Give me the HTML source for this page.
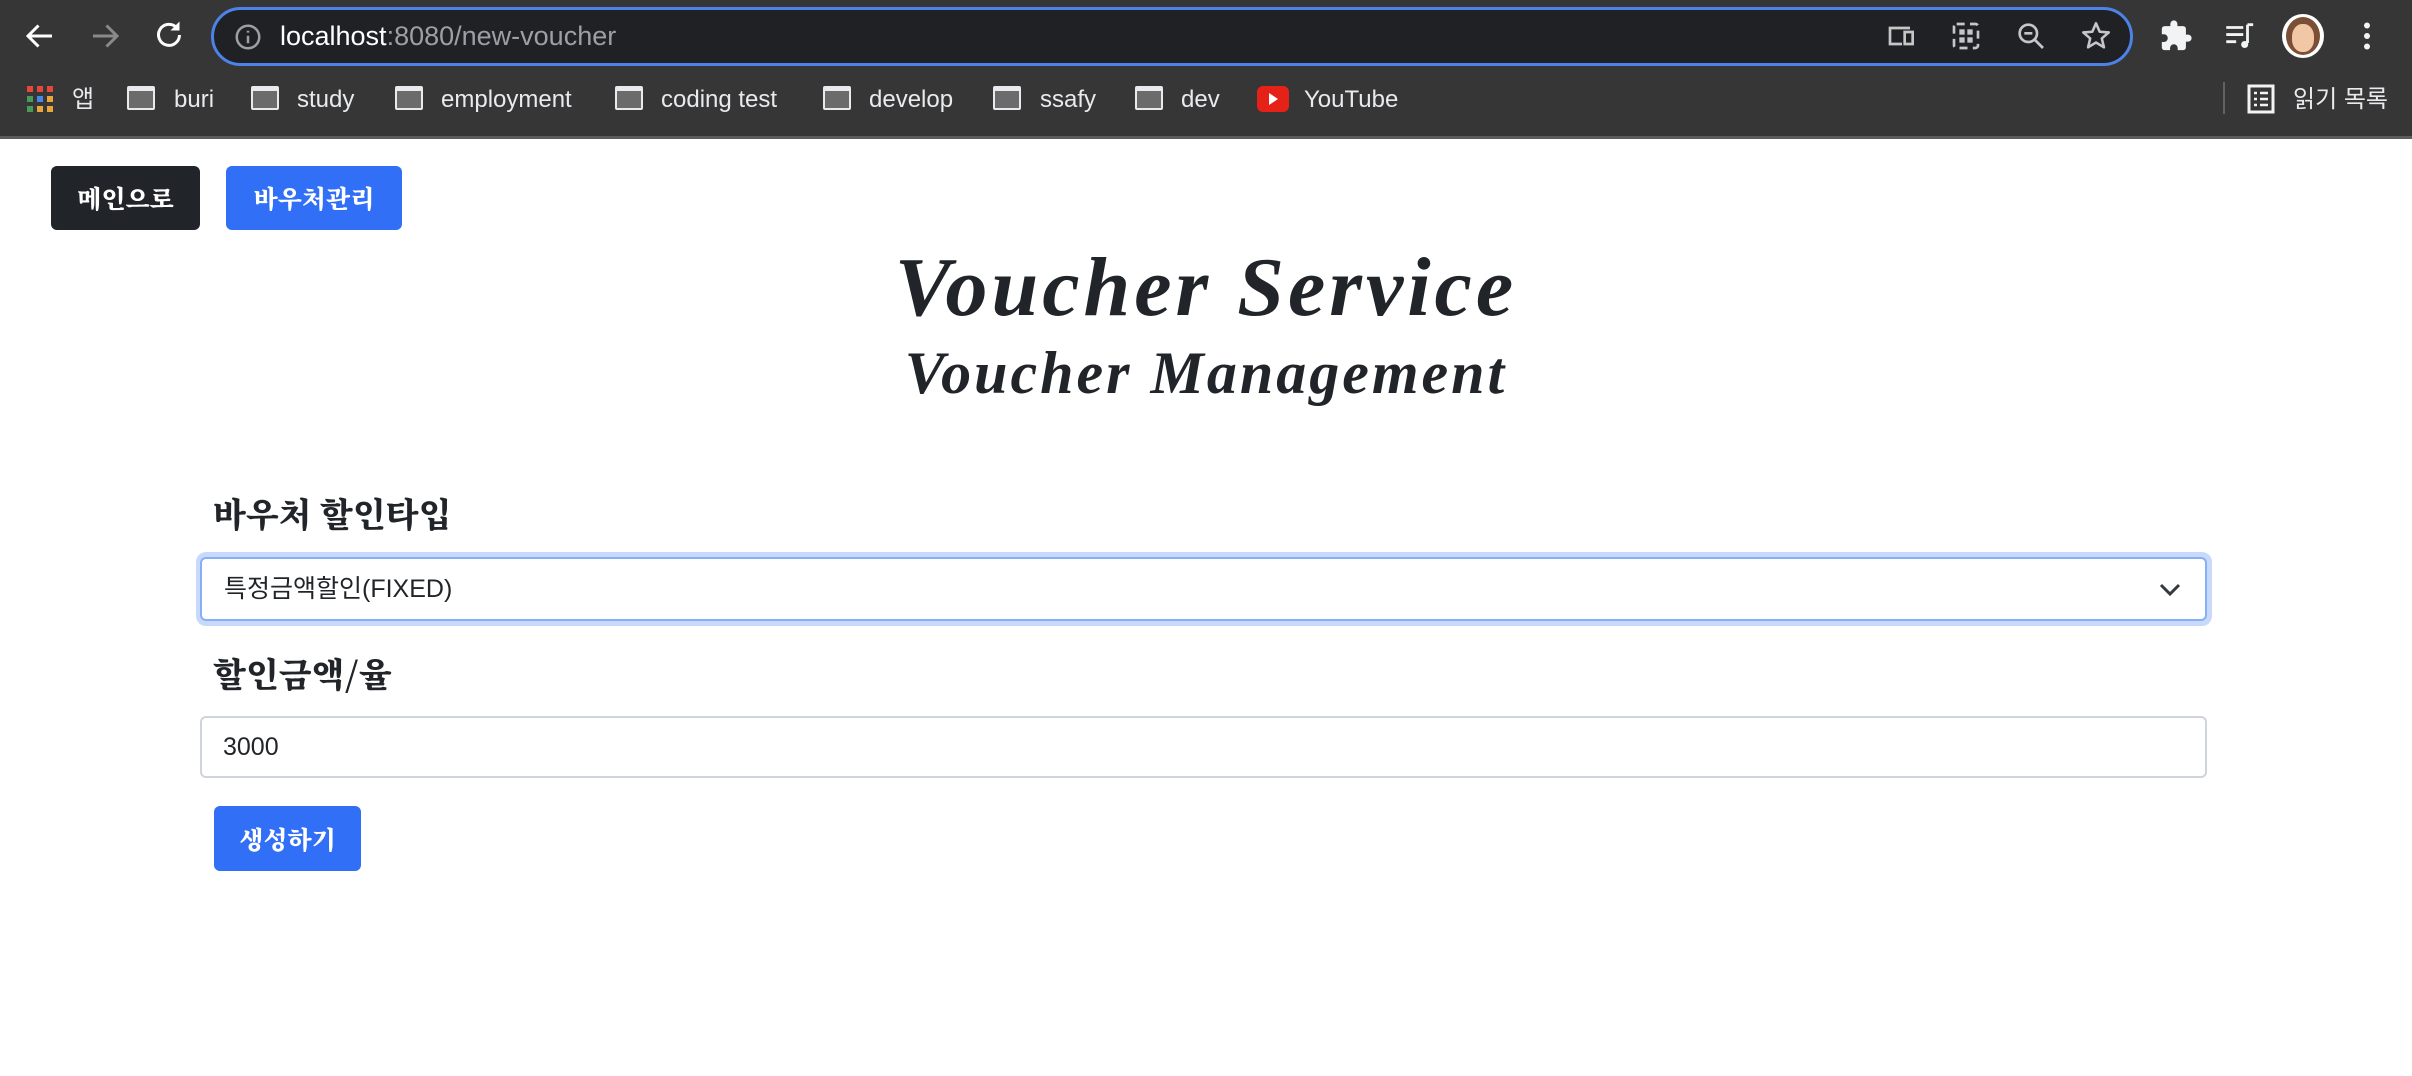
<!DOCTYPE html>
<html><head><meta charset="utf-8"><style>
*{box-sizing:border-box;margin:0;padding:0}
body{width:2412px;height:1076px;background:#fff;position:relative;overflow:hidden;font-family:"Liberation Sans","Noto Sans CJK KR",sans-serif}
.abs{position:absolute}
#chrome{left:0;top:0;width:2412px;height:136px;background:#363636}
#line{left:0;top:136px;width:2412px;height:3px;background:#5c5c5c}
#addr{left:211px;top:7px;width:1922px;height:59px;border:3px solid #4d82e6;border-radius:30px;background:#202124}
.url{left:280px;top:18px;font-size:27px;color:#fff;line-height:36px}
.url span{color:#9aa0a6}
.bm{top:84px;font-size:24px;color:#e8eaed;line-height:32px}
.fold{top:86px;width:28px;height:24px;border:2px solid #e8eaed;border-top-width:5px;background:#6b6b6b;border-radius:2px}
.btn{border-radius:6px;color:#fff;font-family:"Noto Serif CJK SC","Noto Sans CJK KR",serif;font-weight:900;font-size:25px;display:flex;align-items:center;justify-content:center}
.lbl{font-family:"Noto Serif CJK SC","Noto Sans CJK KR",serif;font-weight:900;font-size:34px;color:#212529}
.title{width:2412px;text-align:center;font-family:"Liberation Serif",serif;font-weight:bold;font-style:italic;color:#212529}
</style></head><body>
<div id="chrome" class="abs"></div>
<div id="line" class="abs"></div>
<svg class="abs" style="left:22px;top:18px" width="36" height="36" viewBox="0 0 24 24"><path d="M20 12H5M11 5l-7 7 7 7" stroke="#fff" stroke-width="2" fill="none"/></svg>
<svg class="abs" style="left:87px;top:18px" width="36" height="36" viewBox="0 0 24 24"><path d="M4 12h15M13 5l7 7-7 7" stroke="#8a8a8a" stroke-width="2" fill="none"/></svg>
<svg class="abs" style="left:151px;top:17px" width="36" height="36" viewBox="0 0 24 24"><path d="M19 12a7 7 0 1 1-2-5" stroke="#fff" stroke-width="2" fill="none"/><path d="M19 3v6h-6z" fill="#fff"/></svg>
<div id="addr" class="abs"></div>
<svg class="abs" style="left:233px;top:22px" width="30" height="30" viewBox="0 0 24 24"><circle cx="12" cy="12" r="9" stroke="#9aa0a6" stroke-width="2" fill="none"/><path d="M12 11v6M12 7v1.5" stroke="#9aa0a6" stroke-width="2"/></svg>
<div class="abs url">localhost<span>:8080/new-voucher</span></div>
<svg class="abs" style="left:1886px;top:20px" width="32" height="32" viewBox="0 0 24 24"><path d="M3 17V6h15M2 18h10M14 9h6v9h-6z" stroke="#c4c7c5" stroke-width="2" fill="none"/></svg>
<svg class="abs" style="left:1950px;top:20px" width="32" height="32" viewBox="0 0 24 24"><rect x="3" y="3" width="18" height="18" rx="2" stroke="#c4c7c5" stroke-width="2" fill="none" stroke-dasharray="6 4"/><rect x="7" y="7" width="4" height="4" fill="#c4c7c5"/><rect x="13" y="7" width="4" height="4" fill="#c4c7c5"/><rect x="7" y="13" width="4" height="4" fill="#c4c7c5"/><rect x="13" y="13" width="4" height="4" fill="#c4c7c5"/></svg>
<svg class="abs" style="left:2015px;top:20px" width="32" height="32" viewBox="0 0 24 24"><circle cx="10" cy="10" r="6.5" stroke="#c4c7c5" stroke-width="2" fill="none"/><path d="M15 15l6 6M7 10h6" stroke="#c4c7c5" stroke-width="2"/></svg>
<svg class="abs" style="left:2079px;top:19px" width="34" height="34" viewBox="0 0 24 24"><path d="M12 3l2.6 6 6.4.5-4.9 4.2 1.5 6.3L12 16.6 6.4 20l1.5-6.3L3 9.5l6.4-.5z" stroke="#c4c7c5" stroke-width="1.8" fill="none" stroke-linejoin="round"/></svg>
<svg class="abs" style="left:2159px;top:19px" width="34" height="34" viewBox="0 0 24 24"><path d="M20.5 11H19V7a2 2 0 0 0-2-2h-4V3.5a2.5 2.5 0 0 0-5 0V5H4a2 2 0 0 0-2 2v3.8h1.5a2.7 2.7 0 0 1 0 5.4H2V20a2 2 0 0 0 2 2h3.8v-1.5a2.7 2.7 0 0 1 5.4 0V22H17a2 2 0 0 0 2-2v-4h1.5a2.5 2.5 0 0 0 0-5z" fill="#f1f3f4"/></svg>
<svg class="abs" style="left:2222px;top:19px" width="34" height="34" viewBox="0 0 24 24"><path d="M3 6h12M3 11h12M3 16h7" stroke="#f1f3f4" stroke-width="2"/><path d="M18 4v13" stroke="#f1f3f4" stroke-width="2"/><path d="M18 4h4" stroke="#f1f3f4" stroke-width="2"/><circle cx="16" cy="18" r="2.5" fill="#f1f3f4"/></svg>
<div class="abs" style="left:2282px;top:14px;width:42px;height:44px;border-radius:50%;background:#fff;"></div>
<div class="abs" style="left:2286px;top:17px;width:34px;height:38px;border-radius:50%;background:#7a4f35"></div>
<div class="abs" style="left:2292px;top:24px;width:22px;height:28px;border-radius:45%;background:#f2c7a5"></div>
<svg class="abs" style="left:2352px;top:18px" width="30" height="36" viewBox="0 0 10 24"><circle cx="5" cy="5" r="2" fill="#f1f3f4"/><circle cx="5" cy="12" r="2" fill="#f1f3f4"/><circle cx="5" cy="19" r="2" fill="#f1f3f4"/></svg>
<svg class="abs" style="left:27px;top:86px" width="27" height="27" viewBox="0 0 27 27">
<rect x="0" y="0" width="6" height="6" fill="#e4473c"/><rect x="10" y="0" width="6" height="6" fill="#e4473c"/><rect x="20" y="0" width="6" height="6" fill="#e4473c"/>
<rect x="0" y="10" width="6" height="6" fill="#4a9a5a"/><rect x="10" y="10" width="6" height="6" fill="#4a86e8"/><rect x="20" y="10" width="6" height="6" fill="#e8a53a"/>
<rect x="0" y="20" width="6" height="6" fill="#4a9a5a"/><rect x="10" y="20" width="6" height="6" fill="#e8a53a"/><rect x="20" y="20" width="6" height="6" fill="#e8a53a"/></svg>
<div class="abs bm" style="left:72px">앱</div>
<div class="abs fold" style="left:127px"></div><div class="abs bm" style="left:174px">buri</div>
<div class="abs fold" style="left:251px"></div><div class="abs bm" style="left:297px">study</div>
<div class="abs fold" style="left:395px"></div><div class="abs bm" style="left:441px">employment</div>
<div class="abs fold" style="left:615px"></div><div class="abs bm" style="left:661px">coding test</div>
<div class="abs fold" style="left:823px"></div><div class="abs bm" style="left:869px">develop</div>
<div class="abs fold" style="left:993px"></div><div class="abs bm" style="left:1040px">ssafy</div>
<div class="abs fold" style="left:1135px"></div><div class="abs bm" style="left:1181px">dev</div>
<div class="abs" style="left:1257px;top:86px;width:32px;height:26px;background:#e62117;border-radius:6px"></div>
<svg class="abs" style="left:1267px;top:92px" width="12" height="14" viewBox="0 0 12 14"><path d="M2 1l9 6-9 6z" fill="#fff"/></svg>
<div class="abs bm" style="left:1304px">YouTube</div>
<div class="abs" style="left:2223px;top:82px;width:2px;height:32px;background:#5f6368"></div>
<svg class="abs" style="left:2247px;top:84px" width="28" height="30" viewBox="0 0 28 30"><rect x="2" y="2" width="24" height="26" stroke="#f1f3f4" stroke-width="3" fill="none"/><path d="M7 9h3M13 9h8M7 15h3M13 15h8M7 21h3M13 21h8" stroke="#f1f3f4" stroke-width="2.5"/></svg>
<div class="abs bm" style="left:2293px">읽기 목록</div>
<div class="abs btn" style="left:51px;top:166px;width:149px;height:64px;background:#212529">메인으로</div>
<div class="abs btn" style="left:226px;top:166px;width:176px;height:64px;background:#316ff6">바우처관리</div>
<div class="abs title" style="top:238px;font-size:84px;line-height:100px;letter-spacing:4px">Voucher Service</div>
<div class="abs title" style="top:338px;font-size:60px;line-height:70px;letter-spacing:3px">Voucher Management</div>
<div class="abs lbl" style="left:213px;top:488px;line-height:50px">바우처 할인타입</div>
<div class="abs" style="left:196px;top:552px;width:2016px;height:74px;border-radius:10px;background:#c9d9fb"></div>
<div class="abs" style="left:200px;top:557px;width:2007px;height:64px;border:2px solid #86b0f5;border-radius:6px;background:#fff"></div>
<div class="abs" style="left:224px;top:571px;font-size:25px;color:#212529;line-height:36px">특정금액할인(FIXED)</div>
<svg class="abs" style="left:2158px;top:580px" width="24" height="18" viewBox="0 0 24 18"><path d="M3 5l9 9 9-9" stroke="#343a40" stroke-width="3" fill="none"/></svg>
<div class="abs lbl" style="left:213px;top:648px;line-height:50px">할인금액/율</div>
<div class="abs" style="left:200px;top:716px;width:2007px;height:62px;border:2px solid #ced4da;border-radius:6px;background:#fff"></div>
<div class="abs" style="left:223px;top:729px;font-size:25px;color:#212529;line-height:36px">3000</div>
<div class="abs btn" style="left:214px;top:806px;width:147px;height:65px;background:#316ff6">생성하기</div>
</body></html>
